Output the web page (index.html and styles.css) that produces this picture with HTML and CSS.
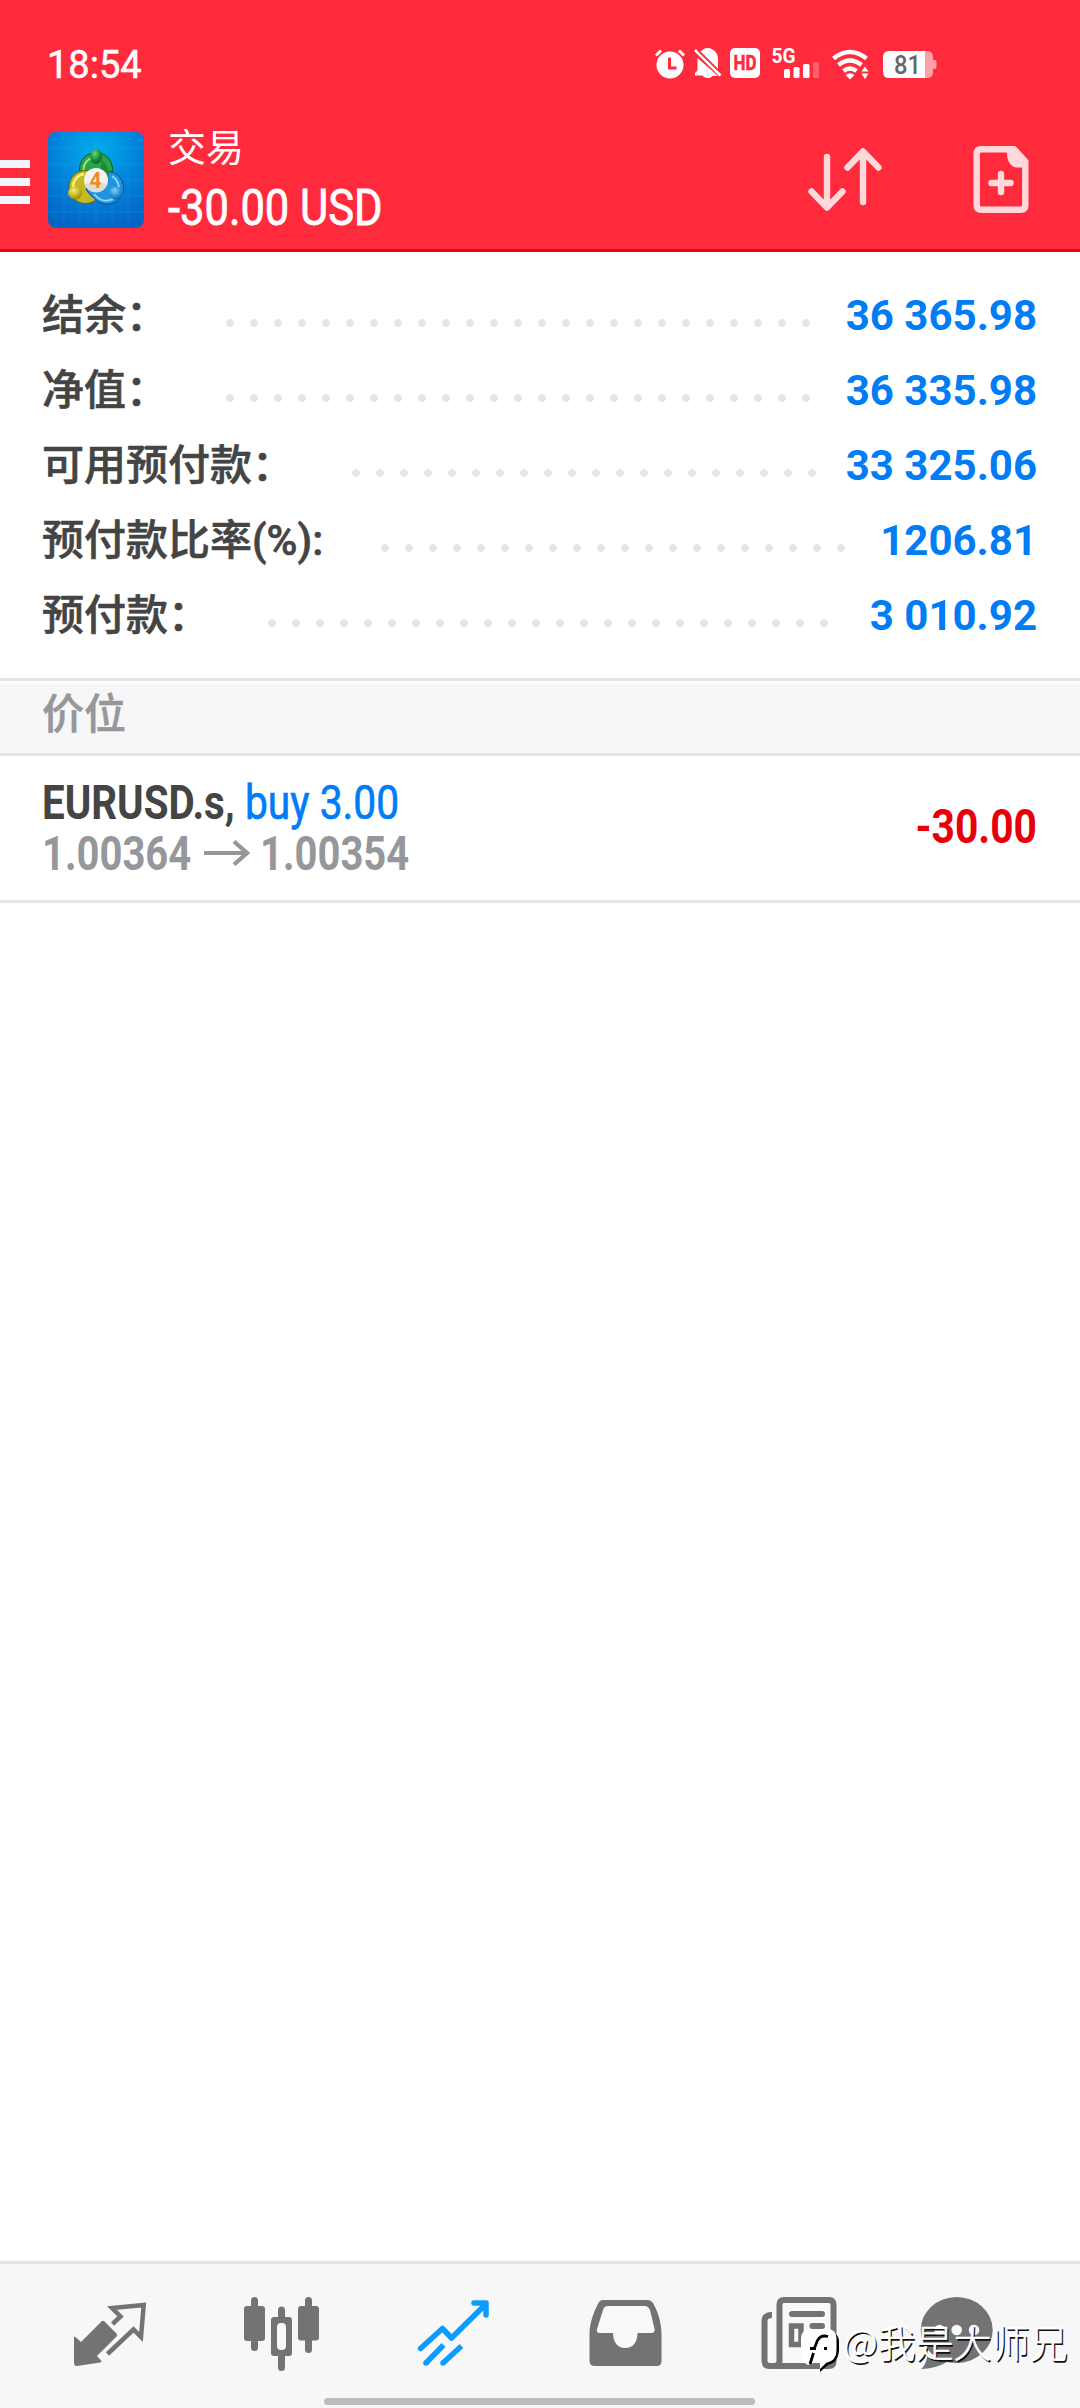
FILE: index.html
```html
<!DOCTYPE html>
<html lang="zh-CN">
<head>
<meta charset="utf-8">
<title>交易</title>
<link rel="stylesheet" href="styles.css">
</head>
<body>
<div class="screen">
  <header class="header">
    <div class="status">
      <span class="clock">18:54</span>
      <svg class="status-icons" width="288" height="36" viewBox="655 45 288 36" fill="#fff">
        <circle cx="672" cy="65" r="13.5"/>
        <path d="M658 55.500l5-5M686 55.500l-5-5" stroke="#fff" stroke-width="3" fill="none"/>
        <path d="M671.500 57.500v10.500h7" stroke="#ff2b3c" stroke-width="3" fill="none"/>
        <path d="M702 52.500C704 50 706 48 710 48C717 49 720 54 720 59V69L702 51ZM699.500 58L720 76H714C713.500 77.500 712 78 710 78C707 78 705.500 77 704.500 75.500H697V73L699.500 70.500Z"/>
        <path d="M697 50L722.500 75.500" stroke="#fff" stroke-width="2.500"/>
        <path d="M700 50.500L722 72" stroke="#ff2b3c" stroke-width="1.500"/>
        <rect x="732" y="48" width="30" height="30" rx="5"/>
        <text class="hd" x="735.500" y="69.500" textLength="23" lengthAdjust="spacingAndGlyphs">HD</text>
        <text class="net" x="773.500" y="63" textLength="24" lengthAdjust="spacingAndGlyphs">5G</text>
        <rect x="786" y="69" width="6" height="9" rx="1.500"/>
        <rect x="795.500" y="67" width="6" height="11" rx="1.500"/>
        <rect x="805" y="64" width="6.500" height="14" rx="1.500"/>
        <rect x="815" y="62" width="6" height="16" rx="1.500" opacity=".25"/>
        <path d="M835.500 58.500Q852 45.500 868.500 58.500M840.500 65Q852 56 863.500 65M845.500 71Q852 66 858.500 71" stroke="#fff" stroke-width="4.400" fill="none"/>
        <path d="M847.500 75Q852 71.500 856.500 75L852 79.500ZM863.500 71.500h7l-3.500-5zM863.500 73.500h7l-3.500 5.500z"/>
        <path d="M926 51h3q6 0 6 6v3h1.500q2 0 2 2v5q0 2-2 2H935v3q0 6-6 6h-3z" opacity=".55"/>
        <path d="M891 51h36v27h-36q-6 0-6-6v-15q0-6 6-6z"/>
        <text class="level" x="896" y="73.500" textLength="27" lengthAdjust="spacingAndGlyphs">81</text>
      </svg>
    </div>
    <div class="toolbar">
      <div class="menu"><i></i><i></i><i></i></div>
      <svg class="logo" width="96" height="96" viewBox="0 0 96 96">
        <defs>
          <radialGradient id="sky" cx=".5" cy=".2" r=".85"><stop offset="0" stop-color="#00aeea"/><stop offset=".5" stop-color="#0284dc"/><stop offset="1" stop-color="#0364c4"/></radialGradient>
          <radialGradient id="green" cx=".4" cy=".3" r=".8"><stop offset="0" stop-color="#6fd36c"/><stop offset=".6" stop-color="#15873a"/><stop offset="1" stop-color="#075f25"/></radialGradient>
          <radialGradient id="gold" cx=".4" cy=".3" r=".8"><stop offset="0" stop-color="#f5ef7d"/><stop offset=".6" stop-color="#bcae1a"/><stop offset="1" stop-color="#7c7408"/></radialGradient>
          <radialGradient id="blue" cx=".4" cy=".3" r=".8"><stop offset="0" stop-color="#7dd2f8"/><stop offset=".6" stop-color="#1d8ad4"/><stop offset="1" stop-color="#0b569c"/></radialGradient>
        </defs>
        <rect width="96" height="96" rx="8" fill="url(#sky)"/>
        <path d="M16 0V96M32 0V96M48 0V96M64 0V96M80 0V96M0 16H96M0 32H96M0 48H96M0 64H96M0 80H96" stroke="#2fb5ef" stroke-width=".7" opacity=".28"/>
        <circle cx="48" cy="37" r="16.500" fill="#2ba348" stroke="#08581f"/>
        <path d="M35.500 38a13 13 0 0 1 12-13" stroke="#9be69a" stroke-width="2" fill="none"/>
        <circle cx="37.500" cy="55" r="16.500" fill="#c5b922" stroke="#6b640a"/>
        <path d="M25 55a13 13 0 0 1 11-13" stroke="#f5ee85" stroke-width="2.500" fill="none"/>
        <path d="M38 57C46 53 50 47 62 39.500A16.500 16.500 0 1 1 47 67Q41 63 38 57Z" fill="#2094dd" stroke="#0a4f91"/>
        <path d="M46 62Q54 72 65 67M64 44Q70 48 71 55" stroke="#8bd8fa" stroke-width="2" fill="none"/>
        <path d="M54 28Q63 36 60 48L52 42Z" fill="#1c8a3c"/>
        <ellipse cx="48" cy="24.500" rx="6" ry="7.500" fill="url(#green)"/>
        <ellipse cx="27" cy="61" rx="7" ry="6.500" fill="url(#gold)"/>
        <ellipse cx="68" cy="61" rx="7" ry="6.500" fill="url(#blue)"/>
        <circle cx="48" cy="48" r="12" fill="#f4f3ef"/>
        <path d="M36.500 52Q48 49 59.500 52A12 12 0 0 1 36.500 52" fill="#dcdcd8"/>
        <text class="four" x="41.500" y="56" textLength="12" lengthAdjust="spacingAndGlyphs">4</text>
      </svg>
      <div class="titles">
        <div class="title">交易</div>
        <div class="profit">-30.00 USD</div>
      </div>
      <svg class="tools" width="230" height="76" viewBox="807 142 230 76" fill="none" stroke="#ffd8db" stroke-width="6.400" stroke-linecap="round" stroke-linejoin="round">
        <path d="M828 157V207M812.500 191.500L828 207.500L843.500 191.500M864 202V152M848.500 167.500L864 151.500L879.500 167.500"/>
        <path d="M982 149.200H1015L1026.300 161.500V205Q1026.300 209.800 1021.500 209.800H982.500Q977.700 209.800 977.700 205V154Q977.700 149.200 982 149.200Z"/>
        <path d="M1008 150V154C1008 161 1012 167.500 1018 167.500H1026V160L1016 150Z" fill="#ffd8db" stroke="none"/>
        <path d="M1002 174V192M992.500 183H1011.500"/>
      </svg>
    </div>
  </header>

  <section class="summary">
    <div class="row"><span>结余：</span><i class="dots" style="--n:25"></i><b>36 365.98</b></div>
    <div class="row"><span>净值：</span><i class="dots" style="--n:25"></i><b>36 335.98</b></div>
    <div class="row"><span>可用预付款：</span><i class="dots" style="--n:20"></i><b>33 325.06</b></div>
    <div class="row"><span>预付款比率(%):</span><i class="dots" style="--n:20"></i><b>1206.81</b></div>
    <div class="row"><span>预付款：</span><i class="dots" style="--n:24"></i><b>3 010.92</b></div>
  </section>

  <h2 class="section-title">价位</h2>

  <div class="position">
    <div class="deal">
      <div class="line"><span class="symbol">EURUSD.s,</span><span class="side">buy 3.00</span></div>
      <div class="line prices"><span class="price">1.00364</span>
        <svg class="to" width="46" height="26" viewBox="0 0 46 26" fill="none" stroke="#96979b" stroke-width="4.200"><path d="M0 13H43M30 1.500L43 13L30 24.500"/></svg>
        <span class="price">1.00354</span></div>
    </div>
    <div class="result">-30.00</div>
  </div>

  <nav class="tabs">
    <svg viewBox="24 2264 172 144"><path fill="#737373" d="M74 2337.500Q74 2336 76 2337.500L81 2342L101.500 2321.500Q103 2320 105 2322L116.500 2333.500Q118 2335 116.500 2336.500L97 2356L101 2360.500Q102.500 2362 100 2362.500L77 2366Q74 2366 74 2362.500Z"/><path d="M112.500 2324L120.500 2316.500L112 2308L143.700 2305L141 2337L133.500 2329.500L107.500 2354" fill="none" stroke="#737373" stroke-width="4.500"/></svg>
    <svg viewBox="196 2264 172 144" fill="#737373"><rect x="251" y="2297" width="7" height="54" rx="3.500"/><rect x="244" y="2306" width="21" height="35" rx="3"/><rect x="278" y="2306.500" width="7" height="64.500" rx="3.500"/><rect x="271" y="2317" width="21" height="39" rx="3"/><rect x="277" y="2323" width="9" height="27" rx="4" fill="#f9f9f9"/><rect x="305" y="2297" width="7" height="56" rx="3.500"/><rect x="298" y="2306" width="21" height="34.500" rx="3"/></svg>
    <svg viewBox="368 2264 172 144" fill="none" stroke="#0c9bff" stroke-width="5.500"><path d="M420.500 2348.500L442.500 2328.500L451.500 2338L486 2304M474 2303H486V2315" stroke-linecap="round" stroke-linejoin="round"/><path d="M426 2363L443.500 2345M443 2363L461.500 2346"/><g fill="#0c9bff" stroke="none"><circle cx="426" cy="2363" r="2.800"/><circle cx="443" cy="2363" r="2.800"/></g></svg>
    <svg viewBox="541 2264 172 144"><path fill="#737373" d="M604 2300H649Q652 2300 654 2303C659 2312 662.500 2323 662.500 2334V2361Q662.500 2366 657.500 2366H595.500Q590.500 2366 590.500 2361V2334C590.500 2323 595 2311 599.500 2303Q601 2300 604 2300Z"/><path fill="#f9f9f9" d="M609 2306H645Q649.500 2306 651 2310L655.500 2329Q656.500 2333 652 2333H638.500C638.500 2342 634 2348 626.300 2348S614 2342 614 2333H601Q597 2333 598 2329L604 2310Q605 2306 609 2306Z"/></svg>
    <svg viewBox="713 2264 172 144" fill="none" stroke="#737373" stroke-width="6"><path d="M773 2315Q765.500 2315 765.500 2321V2361Q765.500 2366 771 2366H830Q834.500 2366 834.500 2361V2304.500Q834.500 2300 830 2300H785Q780.500 2300 780.500 2304.500V2361Q780.500 2366 774 2366" fill="#f9f9f9"/><path d="M793 2314H823M813.500 2326H823M813.500 2338H823" stroke-linecap="round"/><rect x="792.500" y="2326" width="9.500" height="18.500" stroke-width="5.500"/></svg>
    <svg viewBox="885 2264 172 144"><ellipse cx="957.700" cy="2330" rx="36" ry="33" fill="#737373"/><path d="M922 2369Q927 2365 928.500 2355L948 2362Q936 2369 922 2369Z" fill="#737373"/><g fill="#f9f9f9"><circle cx="940.500" cy="2330" r="5.300"/><circle cx="957.700" cy="2330" r="5.300"/><circle cx="975" cy="2330" r="5.300"/></g></svg>
    <div class="pill"></div>
    <div class="watermark">
      <svg width="42" height="48" viewBox="800 2325 42 48"><path d="M828 2331Q840 2332 840 2342V2351Q839 2363 829 2365L821 2372V2364Z" fill="#000"/><path d="M812 2329H828Q837 2329 837.500 2338V2350Q837.500 2361 827 2363L821 2369V2362L817 2362L809 2365Q802 2362 802 2354V2339Q802 2329 812 2329Z" fill="#fff"/><path d="M829 2336.500Q820 2334 817.500 2343L815.500 2348M811 2348.500H817M825 2348.500H828M814.500 2353L811 2364" fill="none" stroke="#000" stroke-width="2.800"/></svg>
      <span>@我是大师兄</span>
    </div>
  </nav>
</div>
</body>
</html>
```
FILE: styles.css
```css
* { box-sizing: border-box; }
body { margin: 0; background: #fff; font-family: Roboto, "Noto Sans CJK SC", sans-serif; }
.screen { display: flex; flex-direction: column; width: 1080px; height: 2408px; overflow: hidden; }

.header { height: 252px; background: #ff2b3c; border-bottom: 3px solid #dc0712; color: #fff; flex: none; }
.status { display: flex; justify-content: space-between; padding: 45px 139px 0 47px; height: 120px; }
.clock { font-size: 38px; line-height: 41px; -webkit-text-stroke: .5px #fff; }
.status-icons { display: block; }
.hd { font: bold 20px Roboto, sans-serif; fill: #ff2b3c; stroke: #ff2b3c; stroke-width: .6px; }
.net { font: bold 20px Roboto, sans-serif; }
.level { font: 500 25px Roboto, sans-serif; fill: #666; }

.toolbar { display: flex; align-items: flex-start; }
.menu { display: flex; flex-direction: column; gap: 10px; width: 30px; margin: 40px 18px 0 0; }
.menu i { height: 8px; background: #f1f5ff; }
.logo { display: block; margin-top: 12px; }
.four { font: bold 22px Roboto, sans-serif; fill: #f28a26; }
.titles { margin-left: 24px; flex: 1; white-space: nowrap; }
.title { font-size: 38px; line-height: 56px; }
.profit { margin-top: 2px; font-size: 50px; line-height: 60px; transform: scaleX(.87); transform-origin: 0 0; -webkit-text-stroke: .8px #fff; }
.tools { display: block; margin: 22px 44px 0 0; }

.summary { padding: 26px 43px 25px 42px; border-bottom: 3px solid #e4e4e4; }
.row { display: flex; font-size: 42px; line-height: 75px; height: 75px; color: #444; font-weight: 500; white-space: nowrap; }
.row span { -webkit-text-stroke: .6px #444; }
.row b { margin-left: auto; color: #007cf5; font-weight: 700; }
.dots { width: calc(var(--n) * 24px); height: 8px; margin: 41px 0 0 50px; background: radial-gradient(circle, #e5e5e5 3.5px, transparent 4.2px) 0 0 / 24px 8px; }

.section-title { margin: 3px 0 0; padding-left: 42px; height: 72px; line-height: 62px; font-size: 42px; font-weight: 500; color: #96979b; background: #f7f7f7; border-bottom: 3px solid #e4e4e4; -webkit-text-stroke: .5px #96979b; }

.position { display: flex; justify-content: space-between; align-items: center; height: 147px; padding: 0 43px 0 42px; border-bottom: 3px solid #e4e4e4; }
.line { display: flex; height: 51px; line-height: 51px; font-size: 48px; white-space: nowrap; }
.symbol { font-weight: 700; color: #444; width: 203px; transform: scaleX(.84); transform-origin: 0 0; }
.side { color: #007cf5; transform: scaleX(.848); transform-origin: 0 0; -webkit-text-stroke: .7px #007cf5; }
.prices { color: #96979b; font-weight: 700; }
.price { width: 162px; transform: scaleX(.833); transform-origin: 0 0; }
.to { margin: 12px 10px 0 0; flex: none; }
.result { margin-bottom: 3px; color: #e60009; font-weight: 700; font-size: 48px; transform: scaleX(.85); transform-origin: 100% 0; }

.tabs { position: relative; display: flex; margin-top: auto; padding: 0 24px; height: 147px; background: #f7f7f7; border-top: 3px solid #e4e4e4; }
.tabs > svg { width: 172px; height: 144px; flex: none; }
.pill { position: absolute; left: 324px; top: 134px; width: 431px; height: 7px; border-radius: 4px; background: #bcbcbc; }
.watermark { position: absolute; left: 799px; top: 61px; display: flex; align-items: flex-start; color: #fff; font: 300 38px/44px "Noto Sans CJK SC", sans-serif; text-shadow: 1.5px 1.5px 0 #111; white-space: nowrap; }
.watermark svg { display: block; margin-right: 2px; }
.watermark span { margin-top: -6px; -webkit-text-stroke: .5px #fff; }
```
